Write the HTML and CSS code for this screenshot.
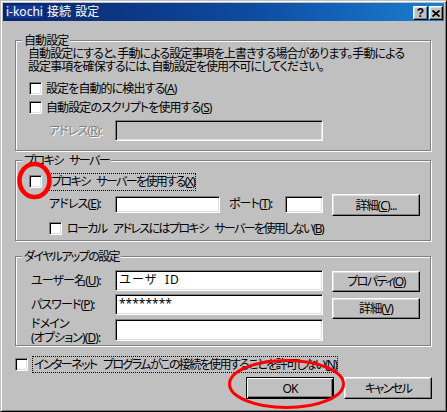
FILE: index.html
```html
<!DOCTYPE html>
<html lang="ja">
<head>
<meta charset="utf-8">
<title>i-kochi 接続 設定</title>
<link rel="stylesheet" href="styles.css">
</head>
<body>
<div class="window">
  <div class="titlebar">
    <span class="title"><span class="sel">i-kochi</span> 接続 設定</span>
    <span class="tbtn help">?</span>
    <span class="tbtn close"><svg width="8" height="7" viewBox="0 0 8 7"><path d="M0.5 0.5L7.5 6.5M7.5 0.5L0.5 6.5" stroke="#000" stroke-width="1.7" fill="none"/></svg></span>
  </div>
  <div class="content">
    <fieldset class="group g1">
      <legend>自動設定</legend>
      <p class="desc">自動設定にすると、手動による設定事項を上書きする場合があります。手動による<br>設定事項を確保するには、自動設定を使用不可にしてください。</p>
      <div class="row crow first"><span class="cb"></span><span class="clbl">設定を自動的に検出する(<u>A</u>)</span></div>
      <div class="row crow"><span class="cb"></span><span class="clbl">自動設定のスクリプトを使用する(<u>S</u>)</span></div>
      <div class="row frow"><span class="flbl disabled">アドレス(<u>R</u>):</span><span class="edit wide disabled-edit"></span></div>
    </fieldset>

    <fieldset class="group g2">
      <legend class="kata">プロキシ サーバー</legend>
      <div class="row crow first"><span class="cb"></span><span class="focus kata">プロキシ サーバーを使用する(<u>X</u>)</span></div>
      <div class="row prow">
        <span class="flbl">アドレス(<u>E</u>):</span><span class="edit addr"></span>
        <span class="flbl port">ポート(<u>T</u>):</span><span class="edit portbox"></span>
        <span class="btn">詳細(<u>C</u>)...</span>
      </div>
      <div class="row crow local"><span class="cb"></span><span class="clbl kata">ローカル アドレスにはプロキシ サーバーを使用しない(<u>B</u>)</span></div>
    </fieldset>

    <fieldset class="group g3">
      <legend class="kata">ダイヤルアップの設定</legend>
      <div class="row drow user">
        <span class="flbl">ユーザー名(<u>U</u>):</span><span class="edit wide full">ユーザ ID</span>
        <span class="btn kata">プロパティ(<u>O</u>)</span>
      </div>
      <div class="row drow pass">
        <span class="flbl">パスワード(<u>P</u>):</span><span class="edit wide">********</span>
        <span class="btn">詳細(<u>V</u>)</span>
      </div>
      <div class="row drow dom">
        <span class="flbl two">ドメイン<br>(オプション)(<u>D</u>):</span><span class="edit wide"></span>
      </div>
    </fieldset>

    <div class="row bottomchk"><span class="cb"></span><span class="focus kata">インターネット プログラムがこの接続を使用することを許可しない(<u>N</u>)</span></div>

    <div class="actions">
      <span class="btn default">OK</span>
      <span class="btn kata">キャンセル</span>
    </div>
  </div>
</div>
<svg class="annot" width="447" height="412" viewBox="0 0 447 412">
  <ellipse cx="34.5" cy="180.5" rx="15" ry="16.5" fill="none" stroke="#ff0000" stroke-width="4.5"/>
  <ellipse cx="286.5" cy="384" rx="57" ry="23.5" fill="none" stroke="#ff0000" stroke-width="3"/>
</svg>
</body>
</html>
```

FILE: styles.css
```css
* { box-sizing: border-box; }

body {
  margin: 0;
  position: relative;
  width: 447px;
  height: 412px;
  background: #c0c0c0;
  color: #000;
  font-family: "Noto Sans", "Noto Sans CJK JP", sans-serif;
  font-size: 12px;
  line-height: 13px;
  font-feature-settings: "palt";
  letter-spacing: -0.9px;
  word-spacing: 3px;
}

u { text-decoration: underline; text-underline-offset: 1px; }

.kata { letter-spacing: -1.6px; word-spacing: 5px; }

.window {
  width: 447px;
  height: 412px;
  background: #c0c0c0;
  border: 1px solid;
  border-color: #c0c0c0 #000 #000 #c0c0c0;
  box-shadow: inset 1px 1px #fff, inset -1px -1px #808080;
  padding: 2px;
}

.titlebar {
  height: 18px;
  display: flex;
  align-items: flex-start;
  background: linear-gradient(90deg, #0a246a 0%, #0d4aa0 55%, #1a7fd2 100%);
  color: #fff;
}

.title {
  flex: 1;
  padding-left: 3px;
  line-height: 18px;
  letter-spacing: 0;
  word-spacing: 1px;
}

.sel {
  display: inline-block;
  line-height: 13px;
  background: #143896;
}

.tbtn {
  height: 14px;
  margin-top: 3px;
  margin-right: 1px;
  background: #c0c0c0;
  border: 1px solid;
  border-color: #fff #000 #000 #fff;
  box-shadow: inset -1px -1px #808080, inset 1px 1px #dfdfdf;
  color: #000;
  display: flex;
  align-items: center;
  justify-content: center;
  font-family: "Liberation Sans", sans-serif;
  font-weight: bold;
  font-size: 12px;
  line-height: 12px;
  letter-spacing: 0;
}
.help { width: 15px; }
.close { width: 14px; }

.content {
  padding: 13px 13px 0 12px;
}

.group {
  margin: 0;
  padding: 0;
  min-width: 0;
  border: 1px solid #808080;
  box-shadow: inset 1px 1px #fff, 1px 1px #fff;
}

.group legend {
  margin-left: 6px;
  padding: 0 2px;
  line-height: 13px;
  background: #c0c0c0;
}

.g2 { margin-top: 3px; }
.g3 { margin-top: 9px; }

.row { display: flex; align-items: center; }

.desc { margin: 0; padding-left: 12px; white-space: nowrap; }

.cb {
  flex: none;
  width: 13px;
  height: 13px;
  background: #fff;
  border: 1px solid;
  border-color: #808080 #fff #fff #808080;
  box-shadow: inset 1px 1px #000, inset -1px -1px #dfdfdf;
}

.crow { height: 19px; padding-left: 13px; }
.clbl { margin-left: 4px; white-space: nowrap; }

.focus {
  margin-left: 7px;
  height: 18px;
  line-height: 16px;
  padding: 0 1px;
  border: 1px dotted #000;
  white-space: nowrap;
}

.g1 .first { margin-top: 6px; }
.g1 { padding-bottom: 9px; }

.frow { margin-top: 3px; height: 21px; padding-left: 33px; }
.flbl { flex: none; width: 66px; white-space: nowrap; }
.disabled { color: #808080; text-shadow: 1px 1px #fff; }

.edit {
  flex: none;
  height: 21px;
  background: #fff;
  border: 1px solid;
  border-color: #808080 #fff #fff #808080;
  box-shadow: inset 1px 1px #000, inset -1px -1px #dfdfdf;
  padding: 0 2px 0 3px;
  line-height: 18px;
  white-space: nowrap;
  letter-spacing: 0;
}
.edit.full { font-feature-settings: normal; letter-spacing: 1px; }
.wide { width: 208px; }
.disabled-edit { background: #c0c0c0; }

.btn {
  flex: none;
  width: 88px;
  height: 21px;
  background: #c0c0c0;
  border: 1px solid;
  border-color: #fff #000 #000 #fff;
  box-shadow: inset -1px -1px #808080, inset 1px 1px #dfdfdf;
  display: flex;
  align-items: center;
  justify-content: center;
  white-space: nowrap;
}

/* proxy group */
.g2 .first { margin-top: 5px; }
.g2 { padding-bottom: 2px; }
.prow { margin-top: 3px; height: 22px; padding-left: 33px; align-items: flex-start; }
.prow .flbl { line-height: 20px; }
.prow .edit { height: 17px; margin-top: 2px; }
.addr { width: 105px; }
.port { width: 56px; margin-left: 9px; }
.portbox { width: 38px; }
.prow .btn { height: 22px; margin-left: 9px; }
.local { margin-top: 3px; padding-left: 33px; }
.local .clbl { margin-left: 5px; }

/* dial-up group */
.drow { padding-left: 15px; align-items: flex-start; }
.drow .flbl { width: 84px; line-height: 21px; }
.drow .btn { margin-left: 9px; }
.user { margin-top: 7px; height: 22px; }
.user .btn { margin-top: 1px; }
.pass { margin-top: 2px; height: 23px; }
.pass .btn { margin-top: 4px; }
.dom { height: 28px; }
.dom .flbl.two { line-height: 14px; }
.dom .edit { height: 22px; margin-top: 2px; }

/* bottom */
.bottomchk { margin-top: 10px; height: 17px; padding-left: 0; }
.bottomchk .focus { margin-left: 4px; height: 17px; line-height: 15px; }

.actions {
  margin-top: 4px;
  margin-right: -1px;
  display: flex;
  justify-content: flex-end;
  gap: 10px;
}
.actions .btn { height: 22px; }
.btn.default {
  border: 1px solid #000;
  box-shadow: inset 1px 1px #fff, inset -1px -1px #000, inset -2px -2px #808080;
}

.annot {
  position: absolute;
  left: 0;
  top: 0;
  pointer-events: none;
}
```
